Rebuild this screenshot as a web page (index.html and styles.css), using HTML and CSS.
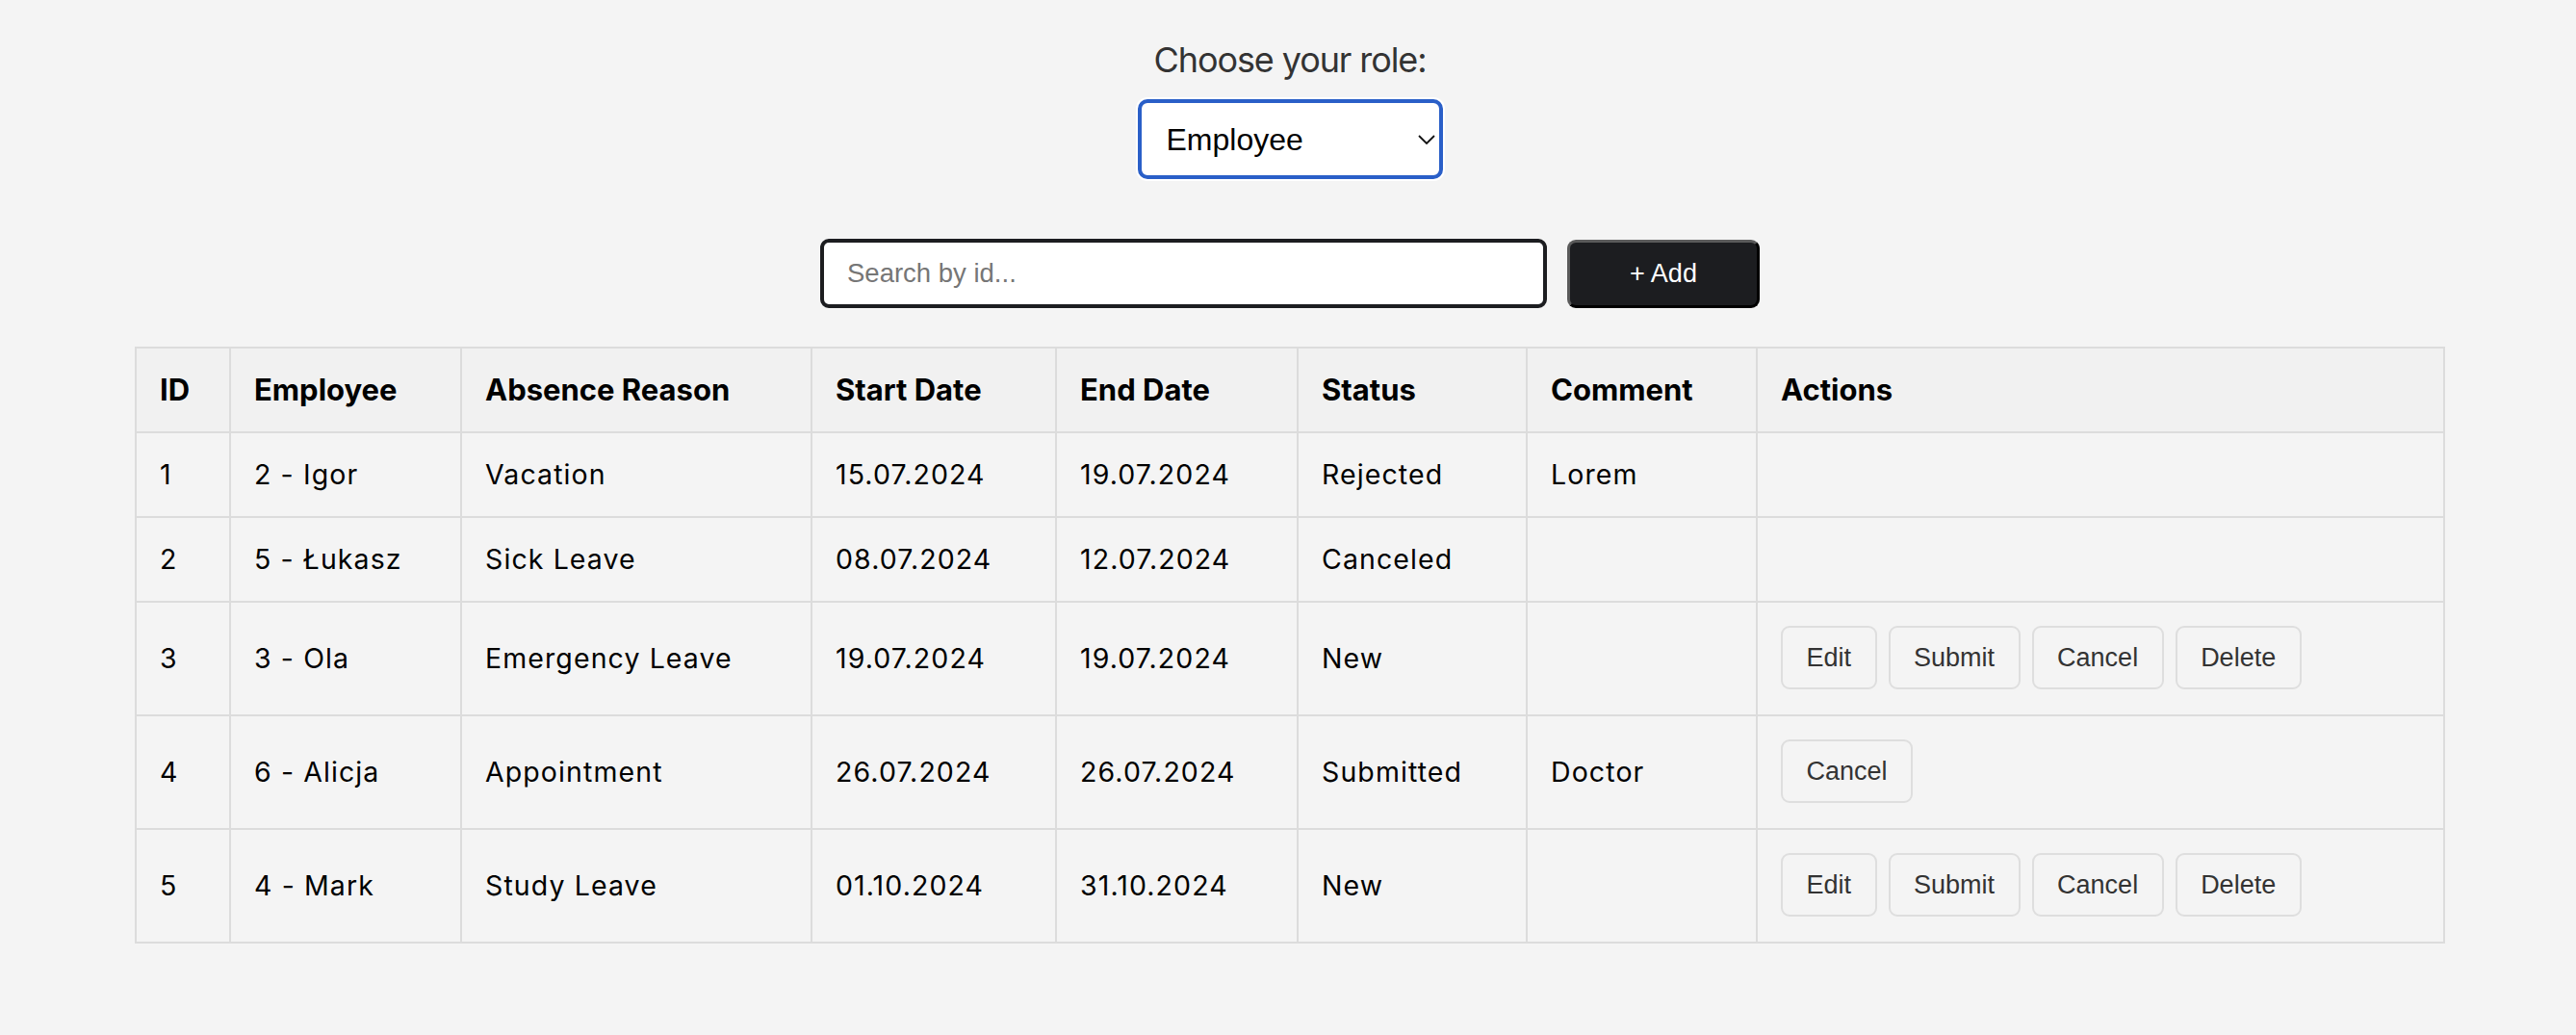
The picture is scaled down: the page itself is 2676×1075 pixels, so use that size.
FILE: index.html
```html
<!DOCTYPE html>
<html lang="en">
<head>
<meta charset="utf-8">
<title>Absence requests</title>
<link rel="stylesheet" href="styles.css">
</head>
<body>
<div class="page">
  <div class="role">
    <label class="role-label" for="role">Choose your role:</label>
    <div class="select-wrap">
      <select id="role" class="role-select">
        <option>Employee</option>
        <option>Manager</option>
      </select>
      <svg class="chevron" width="18" height="10" viewBox="0 0 18 10"><path d="M1 1 L9 9 L17 1" fill="none" stroke="#111" stroke-width="1.8"/></svg>
    </div>
  </div>
  <div class="toolbar">
    <input class="search" type="text" placeholder="Search by id...">
    <button class="add-btn">+ Add</button>
  </div>
  <table class="grid">
    <colgroup>
      <col class="c-id"><col class="c-emp"><col class="c-reason"><col class="c-start"><col class="c-end"><col class="c-status"><col class="c-comment"><col class="c-actions">
    </colgroup>
    <thead>
      <tr><th>ID</th><th>Employee</th><th>Absence Reason</th><th>Start Date</th><th>End Date</th><th>Status</th><th>Comment</th><th>Actions</th></tr>
    </thead>
    <tbody>
      <tr><td>1</td><td>2 - Igor</td><td>Vacation</td><td>15.07.2024</td><td>19.07.2024</td><td>Rejected</td><td>Lorem</td><td></td></tr>
      <tr><td>2</td><td>5 - Łukasz</td><td>Sick Leave</td><td>08.07.2024</td><td>12.07.2024</td><td>Canceled</td><td></td><td></td></tr>
      <tr><td>3</td><td>3 - Ola</td><td>Emergency Leave</td><td>19.07.2024</td><td>19.07.2024</td><td>New</td><td></td>
        <td class="act-cell"><div class="actions"><button class="act">Edit</button><button class="act">Submit</button><button class="act">Cancel</button><button class="act">Delete</button></div></td></tr>
      <tr><td>4</td><td>6 - Alicja</td><td>Appointment</td><td>26.07.2024</td><td>26.07.2024</td><td>Submitted</td><td>Doctor</td>
        <td class="act-cell"><div class="actions"><button class="act">Cancel</button></div></td></tr>
      <tr><td>5</td><td>4 - Mark</td><td>Study Leave</td><td>01.10.2024</td><td>31.10.2024</td><td>New</td><td></td>
        <td class="act-cell"><div class="actions"><button class="act">Edit</button><button class="act">Submit</button><button class="act">Cancel</button><button class="act">Delete</button></div></td></tr>
    </tbody>
  </table>
</div>
</body>
</html>
```
FILE: styles.css
```css
* { box-sizing: border-box; }
html, body { margin: 0; padding: 0; }
body {
  background: #f4f4f4;
  font-family: Inter, "Noto Sans", sans-serif;
  color: #000;
}
.page {
  padding: 42px 0 0 4px;
  display: flex;
  flex-direction: column;
  align-items: center;
}
.role {
  display: flex;
  flex-direction: column;
  align-items: center;
  gap: 21px;
}
.role-label {
  font-size: 36px;
  line-height: 40px;
  letter-spacing: -1.1px;
  color: #333;
}
.select-wrap {
  position: relative;
  width: 317px;
  height: 83px;
}
.role-select {
  appearance: none;
  -webkit-appearance: none;
  width: 100%;
  height: 100%;
  border: 4px solid #2a5fc8;
  border-radius: 10px;
  box-shadow: 0 0 0 2px #fff;
  background: #fff;
  font-family: "Liberation Sans", Arial, sans-serif;
  font-size: 32px;
  color: #000;
  padding: 0 0 0 26px;
  outline: none;
}
.chevron {
  position: absolute;
  right: 8px;
  top: 37px;
  pointer-events: none;
}
.toolbar {
  margin-top: 62px;
  display: flex;
  gap: 21px;
  align-items: center;
}
.search {
  width: 755px;
  height: 72px;
  border: 4px solid #1c1d20;
  border-radius: 9px;
  background: #fff;
  padding: 0 24px;
  font-family: "Liberation Sans", Arial, sans-serif;
  font-size: 27.5px;
  outline: none;
}
.search::placeholder { color: #767676; }
.add-btn {
  width: 200px;
  height: 71px;
  background: #1c1d20;
  color: #fff;
  border: 3px solid;
  border-color: #5a5a5a #000 #000 #5a5a5a;
  border-radius: 9px;
  font-family: "Liberation Sans", Arial, sans-serif;
  font-size: 27px;
}
.grid {
  margin-top: 40px;
  width: 2398px;
  table-layout: fixed;
  border-collapse: collapse;
  border: 2px solid #dcdcdc;
}
.c-id { width: 98px; }
.c-emp { width: 240px; }
.c-reason { width: 364px; }
.c-start { width: 254px; }
.c-end { width: 251px; }
.c-status { width: 238px; }
.c-comment { width: 239px; }
.c-actions { width: 714px; }
.grid th, .grid td {
  border: 2px solid #dcdcdc;
  text-align: left;
  padding: 24px;
  line-height: 38px;
}
.grid th {
  background: #f1f1f1;
  font-size: 31px;
  font-weight: 700;
}
.grid td {
  font-size: 28.5px;
  letter-spacing: 1.1px;
  vertical-align: middle;
}
.grid td.act-cell {
  padding: 24px 24px 26px;
}
.actions {
  display: flex;
  gap: 12px;
}
.act {
  height: 66px;
  padding: 0 24.5px;
  background: #f4f4f4;
  border: 2px solid #dedede;
  border-radius: 9px;
  font-family: "Liberation Sans", Arial, sans-serif;
  font-size: 27px;
  letter-spacing: 0;
  color: #333;
}
```
